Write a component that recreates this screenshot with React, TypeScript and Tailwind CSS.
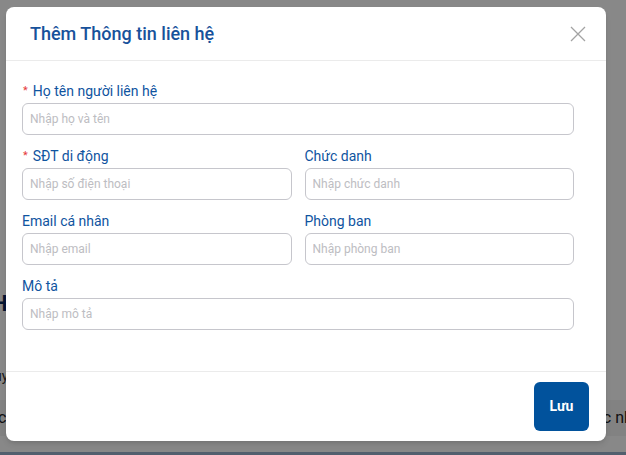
const fields = [
  { label: "Họ tên người liên hệ", placeholder: "Nhập họ và tên", required: true, full: true },
  { label: "SĐT di động", placeholder: "Nhập số điện thoại", required: true },
  { label: "Chức danh", placeholder: "Nhập chức danh" },
  { label: "Email cá nhân", placeholder: "Nhập email" },
  { label: "Phòng ban", placeholder: "Nhập phòng ban" },
  { label: "Mô tả", placeholder: "Nhập mô tả", full: true },
];

const Field = ({ label, placeholder, required, full }: any) => (
  <div className={full ? "col-span-2 flex flex-col" : "flex flex-col"}>
    <label className="mb-[2px] flex h-5 items-center text-[14px] leading-5 text-[#0f549f]">
      {required && <span className="mr-[5px] ml-[1px] text-[11px] text-[#e5383b]">*</span>}
      {label}
    </label>
    <input
      placeholder={placeholder}
      className="h-8 w-full rounded-[6px] border border-[#c6c6cc] bg-white px-[7px] text-[12px] outline-none placeholder:text-[#bdbdc2]"
    />
  </div>
);

const App = () => {
  return (
    <div className="relative h-[455px] w-[626px] overflow-hidden bg-white" style={{ fontFamily: "Roboto, 'Noto Sans', sans-serif" }}>
      {/* page behind the dialog */}
      <div className="flex h-full flex-col">
        <div className="mt-[292px] -ml-[8px] text-[22px] font-bold leading-6 text-[#0d2a5c]">Hồ sơ</div>
        <div className="mt-[50px] -ml-[6px] text-[14px] leading-5 text-[#333]">uy</div>
        <div className="mt-[14px] flex h-[36px] items-center justify-between bg-[#f4f4f4] text-[16px] text-[#222]">
          <span className="-ml-[2px]">cl</span>
          <span className="-mr-[30px]">c nhóm</span>
        </div>
        <div className="mt-auto h-[3px] bg-[#9ab3cf]" />
      </div>

      {/* overlay */}
      <div className="absolute inset-0 bg-black/[0.465]" />

      {/* dialog */}
      <div className="absolute top-[7px] left-[6px] flex h-[434px] w-[600px] flex-col rounded-lg bg-white shadow-md">
        <div className="flex h-[54px] items-center justify-between border-b border-[#ebebeb] pr-[20px] pl-[24px]">
          <h2 className="text-[18px] font-medium text-[#17529b]">Thêm Thông tin liên hệ</h2>
          <svg width="16" height="16" viewBox="0 0 16 16" className="text-[#a3a3a3]">
            <path d="M1 1L15 15M15 1L1 15" stroke="currentColor" strokeWidth="1.3" fill="none" />
          </svg>
        </div>
        <div className="grid flex-1 grid-cols-2 content-start gap-x-[13px] gap-y-[11px] pt-[20px] pr-[32px] pl-[16px]">
          {fields.map((f) => (
            <Field key={f.label} {...f} />
          ))}
        </div>
        <div className="flex h-[70px] items-center justify-end border-t border-[#ebebeb] pr-[17px]">
          <button className="h-[49px] w-[55px] rounded-[6px] bg-[#01529c] text-[14px] font-bold text-white">
            Lưu
          </button>
        </div>
      </div>
    </div>
  );
};

export default App;
